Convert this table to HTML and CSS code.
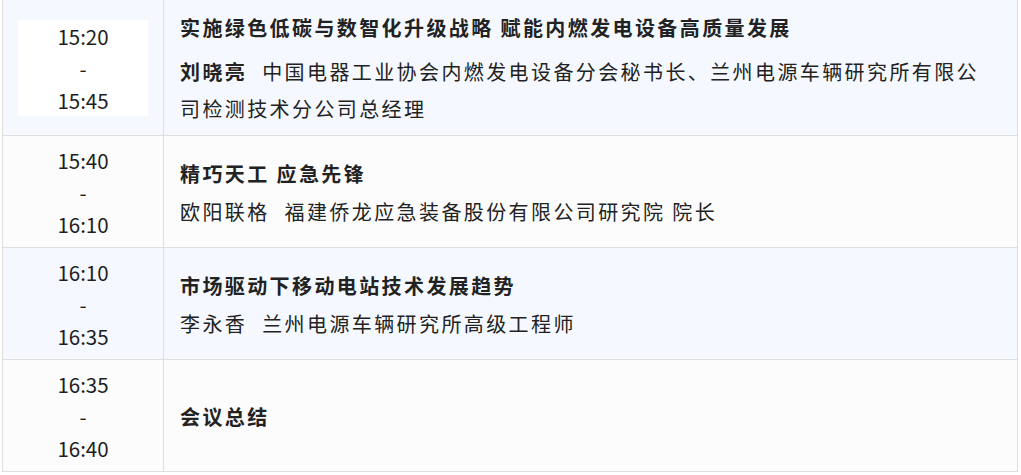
FILE: index.html
```html
<!DOCTYPE html>
<html lang="zh-CN">
<head>
    <meta charset="UTF-8">
    <meta name="viewport" content="width=device-width, initial-scale=1.0">
    <title>会议日程</title>
    <link rel="stylesheet" href="styles.css">
</head>
<body>
    <div class="agenda">
        <table>
            <colgroup>
                <col class="col-time">
                <col>
            </colgroup>
            <tr class="odd">
                <td class="time">
                    <div class="time-box cur">15:20<br>-<br>15:45</div>
                </td>
                <td class="topic">
                    <p class="title">实施绿色低碳与数智化升级战略 赋能内燃发电设备高质量发展</p>
                    <p class="desc"><b class="name">刘晓亮</b>中国电器工业协会内燃发电设备分会秘书长、兰州电源车辆研究所有限公司检测技术分公司总经理</p>
                </td>
            </tr>
            <tr>
                <td class="time">
                    <div class="time-box">15:40<br>-<br>16:10</div>
                </td>
                <td class="topic">
                    <p class="title">精巧天工 应急先锋</p>
                    <p class="desc"><span class="name">欧阳联格</span>福建侨龙应急装备股份有限公司研究院 院长</p>
                </td>
            </tr>
            <tr class="odd">
                <td class="time">
                    <div class="time-box">16:10<br>-<br>16:35</div>
                </td>
                <td class="topic">
                    <p class="title">市场驱动下移动电站技术发展趋势</p>
                    <p class="desc"><span class="name">李永香</span>兰州电源车辆研究所高级工程师</p>
                </td>
            </tr>
            <tr>
                <td class="time">
                    <div class="time-box">16:35<br>-<br>16:40</div>
                </td>
                <td class="topic">
                    <p class="title only">会议总结</p>
                </td>
            </tr>
        </table>
    </div>
</body>
</html>
```

FILE: styles.css
```css
* {
    margin: 0;
    padding: 0;
}

body {
    background: #fff;
    font-family: "Noto Sans CJK SC", "Noto Sans", sans-serif;
    color: #222;
}

.agenda {
    margin: 0 3px 0 2px;
}

table {
    width: 100%;
    border-collapse: collapse;
    table-layout: fixed;
}

.col-time {
    width: 161px;
}

td {
    border: 1px solid #dedede;
    vertical-align: middle;
}

tr:first-child td {
    border-top: none;
}

tr {
    background: #fcfcfc;
}

tr.odd {
    background: #f5f9ff;
}

.time {
    padding: 7.5px 0;
    text-align: center;
}

.time-box {
    font-size: 20.5px;
    line-height: 32px;
    color: #1e1e1e;
}

.time-box.cur {
    width: 130px;
    margin: 0 auto;
    background: #fff;
}

.topic {
    padding: 11px 20px 11px 16px;
}

.title {
    font-size: 20px;
    letter-spacing: 2.4px;
    line-height: 34px;
    padding-top: 3px;
    font-weight: bold;
    color: #222;
    margin-bottom: 2px;
}

.title.only {
    margin-bottom: 0;
}

tr:first-child .topic {
    padding-bottom: 8px;
}

tr:first-child .title {
    padding-top: 0;
    margin-bottom: 8px;
}

.desc {
    font-size: 20px;
    letter-spacing: 2.4px;
    line-height: 37px;
    color: #222;
}

.name {
    margin-right: 15px;
}
```
